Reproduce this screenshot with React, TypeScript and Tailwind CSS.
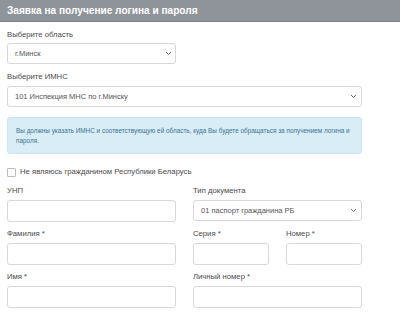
import React from "react";

function Chevron() {
      return (
            <svg width="7" height="5" viewBox="0 0 7 5" className="shrink-0">
                  <polyline points="1,1 3.5,3.5 6,1" fill="none" stroke="#666" strokeWidth="1" />
            </svg>
      );
}

function Select({ value, className }: { value: string; className?: string }) {
      return (
            <div
                  className={
                        "h-[21px] border border-[#d6d8db] rounded-[3px] bg-white flex items-center justify-between pl-[7px] pr-[3px] text-[7.5px] text-[#555] " +
                        (className ?? "")
                  }
            >
                  <span>{value}</span>
                  <Chevron />
            </div>
      );
}

function Label({ children }: { children: React.ReactNode }) {
      return <div className="leading-[10px] text-[7.7px] text-[#4a4a4a] mb-[4px]">{children}</div>;
}

function Input() {
      return <div className="h-[22px] border border-[#d6d8db] rounded-[3px] bg-white" />;
}

export default function App() {
      return (
            <div className="w-[400px] h-[312px] bg-white overflow-hidden" style={{ fontFamily: '"Liberation Sans", Arial, sans-serif' }}>
                  <div className="h-[22px] bg-[#8f949b] border-b border-[#7c8188] px-[7px] flex items-center text-white font-bold text-[10.1px]">
                        Заявка на получение логина и пароля
                  </div>

                  <div className="w-[362px] pl-[7px] pt-[8px]">
                        <div className="leading-[10px] text-[7.7px] text-[#4a4a4a] mb-[3px]">Выберите область</div>
                        <Select value="г.Минск" className="w-[169px]" />

                        <div className="mt-[8px]">
                              <Label>Выберите ИМНС</Label>
                              <Select value="101 Инспекция МНС по г.Минску" className="pr-[4px]" />
                        </div>

                        <div className="mt-[10px] bg-[#d9edf7] border border-[#c9e5f1] rounded-[3px] px-[8px] pt-[8px] pb-[7px] text-[6.4px] leading-[10px] text-[#3b7290]">
                              Вы должны указать ИМНС и соответствующую ей область, куда Вы будете обращаться за получением логина и пароля.
                        </div>

                        <div className="mt-[13px] flex items-center gap-[4px]">
                              <div className="w-[9px] h-[9px] border border-[#b9bcbf] rounded-[1px] bg-white" />
                              <span className="text-[7.7px] leading-[10px] text-[#4a4a4a]">Не являюсь гражданином Республики Беларусь</span>
                        </div>

                        <div className="mt-[9px] grid grid-cols-2 gap-x-[17px] gap-y-[7px]">
                              <div>
                                    <Label>УНП</Label>
                                    <Input />
                              </div>
                              <div>
                                    <Label>Тип документа</Label>
                                    <Select value="01 паспорт гражданина РБ" className="pr-[4px]" />
                              </div>

                              <div>
                                    <Label>Фамилия *</Label>
                                    <Input />
                              </div>
                              <div className="grid grid-cols-2 gap-x-[17px]">
                                    <div>
                                          <Label>Серия *</Label>
                                          <Input />
                                    </div>
                                    <div>
                                          <Label>Номер *</Label>
                                          <Input />
                                    </div>
                              </div>

                              <div>
                                    <Label>Имя *</Label>
                                    <Input />
                              </div>
                              <div>
                                    <Label>Личный номер *</Label>
                                    <Input />
                              </div>
                        </div>
                  </div>
            </div>
      );
}
